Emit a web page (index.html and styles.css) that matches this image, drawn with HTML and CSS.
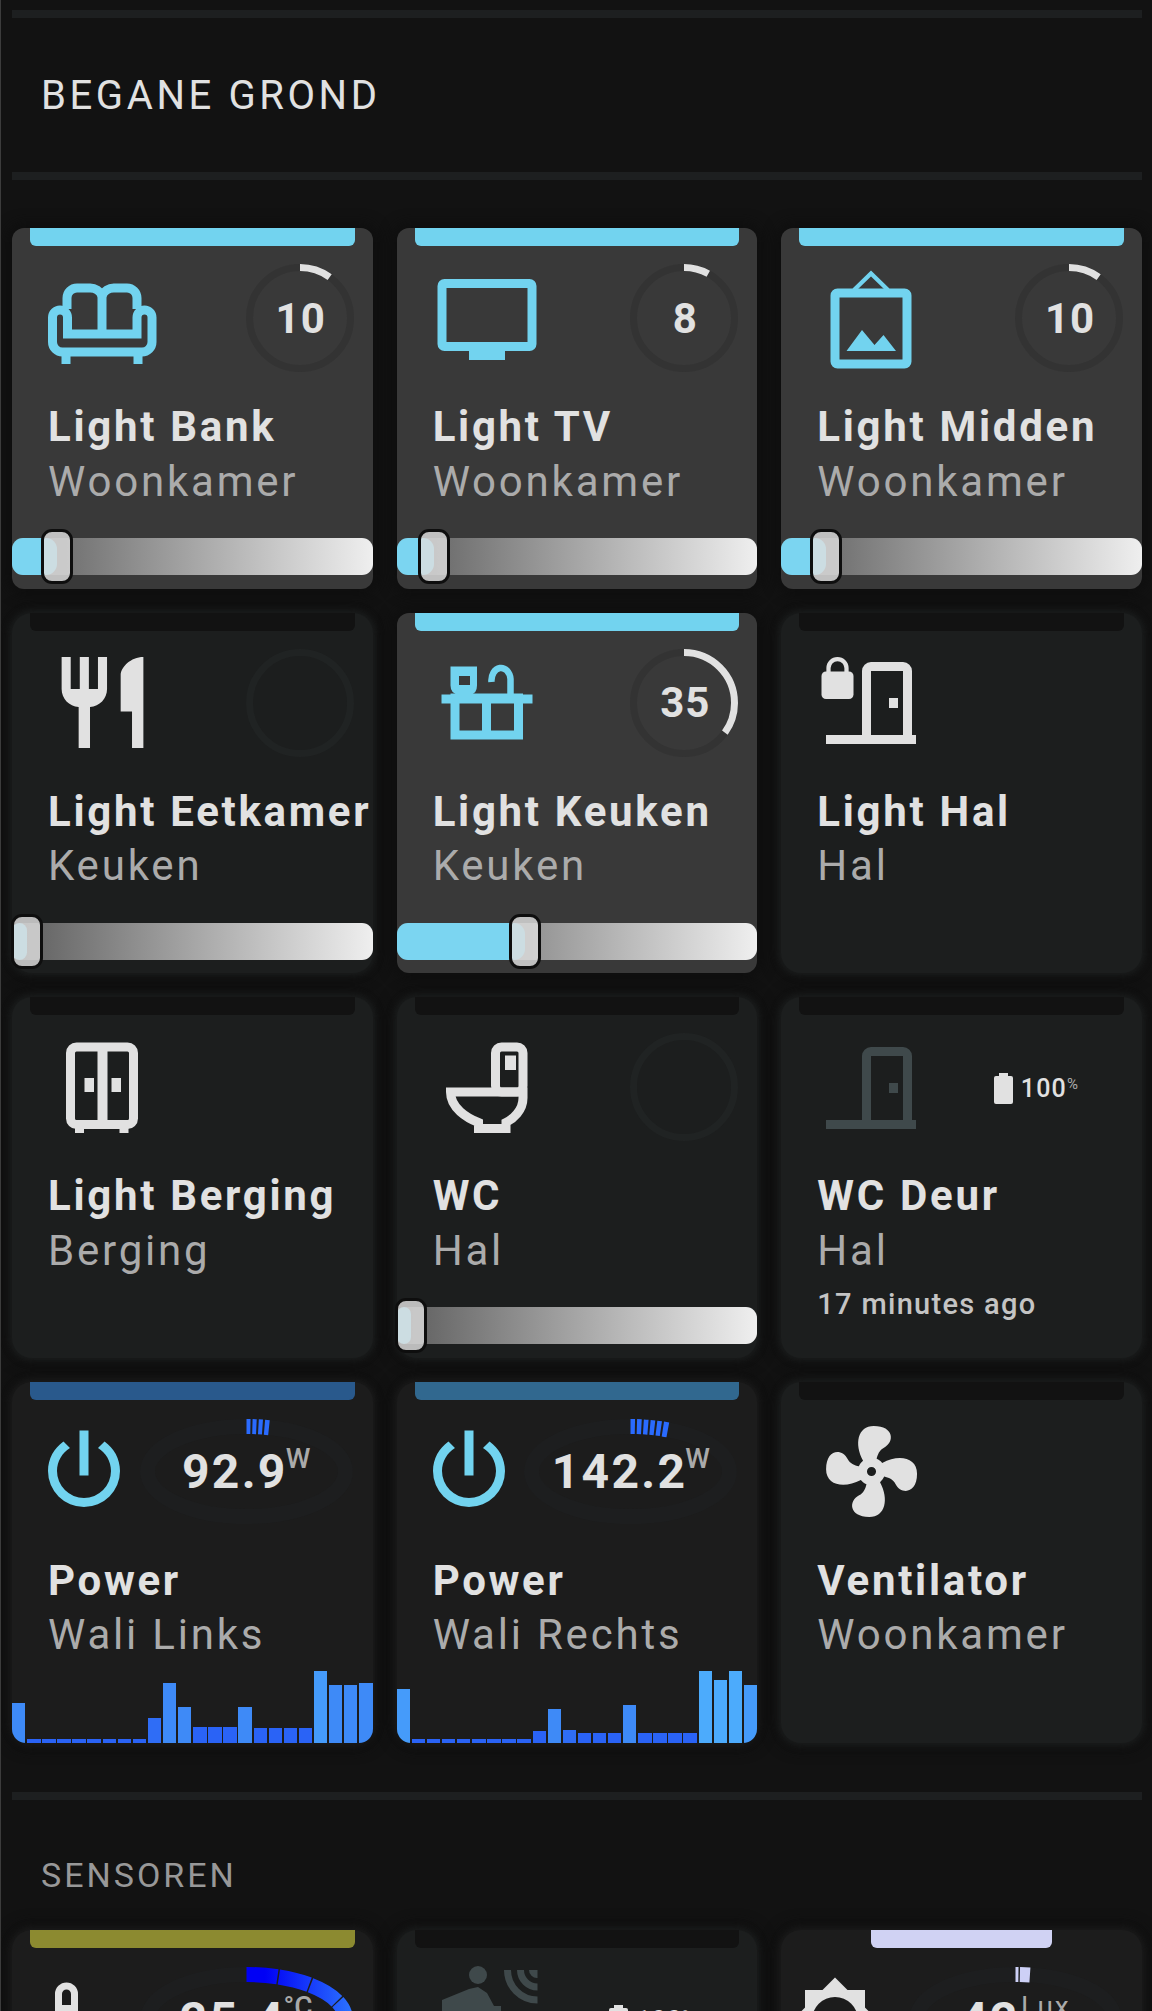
FILE: index.html
```html
<!DOCTYPE html>
<html lang="nl">
<head>
<meta charset="utf-8">
<title>Begane grond</title>
<link rel="stylesheet" href="styles.css">
</head>
<body>
<main class="page">
  <div class="divider first"></div>
  <h2 class="section-title">BEGANE GROND</h2>
  <div class="divider"></div>

  <section class="grid">
    <article class="card on">
      <div class="topbar"></div>
      <div class="head">
        <svg class="icon blue" viewBox="0 0 24 24"><g class="ln"><path d="M5.1 14V10.7a1.5 1.5 0 0 0-3 0V15.6a2 2 0 0 0 2 2H20a2 2 0 0 0 2-2V10.7a1.5 1.5 0 0 0-3 0V14Z"/><path d="M5 9V6.8a2 2 0 0 1 2-2H9.6A2.6 2.6 0 0 1 12 6.3A2.6 2.6 0 0 1 14.4 4.8H17a2 2 0 0 1 2 2V9"/><path d="M12 6V14"/></g><rect x="3.9" y="17" width="1.8" height="3"/><rect x="18.3" y="17" width="1.8" height="3"/></svg>
        <div class="ring"><svg viewBox="0 0 108 108"><circle class="ring-bg" cx="54" cy="54" r="50.5"/><circle class="ring-arc" cx="54" cy="54" r="50.5" pathLength="100" stroke-dasharray="10 100"/></svg><span>10</span></div>
      </div>
      <div class="name">Light Bank</div><div class="sub">Woonkamer</div>
      <div class="slider"><div class="fill" style="width:44.7px"></div><div class="thumb" style="left:28.7px"></div></div>
    </article>

    <article class="card on">
      <div class="topbar"></div>
      <div class="head">
        <svg class="icon blue" viewBox="0 0 24 24"><rect class="ln" x="3" y="3.9" width="18" height="12.6" rx=".5"/><rect x="8.4" y="17" width="7.2" height="2.2"/></svg>
        <div class="ring"><svg viewBox="0 0 108 108"><circle class="ring-bg" cx="54" cy="54" r="50.5"/><circle class="ring-arc" cx="54" cy="54" r="50.5" pathLength="100" stroke-dasharray="8 100"/></svg><span>8</span></div>
      </div>
      <div class="name">Light TV</div><div class="sub">Woonkamer</div>
      <div class="slider"><div class="fill" style="width:37.8px"></div><div class="thumb" style="left:21.8px"></div></div>
    </article>

    <article class="card on">
      <div class="topbar"></div>
      <div class="head">
        <svg class="icon blue" viewBox="0 0 24 24"><rect class="ln" x="4.8" y="5.8" width="14.4" height="14.2" rx=".5"/><path class="ln thin" d="M8.6 5.2L12 1.9L15.4 5.2"/><path d="M7.1 17.4L10.2 13.2L12.7 16.2L14.5 14.2L17 17.4Z"/></svg>
        <div class="ring"><svg viewBox="0 0 108 108"><circle class="ring-bg" cx="54" cy="54" r="50.5"/><circle class="ring-arc" cx="54" cy="54" r="50.5" pathLength="100" stroke-dasharray="10 100"/></svg><span>10</span></div>
      </div>
      <div class="name">Light Midden</div><div class="sub">Woonkamer</div>
      <div class="slider"><div class="fill" style="width:44.7px"></div><div class="thumb" style="left:28.7px"></div></div>
    </article>

    <article class="card off">
      <div class="topbar"></div>
      <div class="head">
        <svg class="icon-s grey" viewBox="0 0 24 24"><path d="M11,9H9V2H7V9H5V2H3V9C3,11.12 4.66,12.84 6.75,12.97V22H9.25V12.97C11.34,12.84 13,11.12 13,9V2H11V9M16,6V14H18.5V22H21V2C18.24,2 16,4.24 16,6Z"/></svg>
        <div class="ring"><svg viewBox="0 0 108 108"><circle class="ring-bg" cx="54" cy="54" r="50.5"/></svg></div>
      </div>
      <div class="name">Light Eetkamer</div><div class="sub">Keuken</div>
      <div class="slider"><div class="fill" style="width:14.7px"></div><div class="thumb" style="left:-1.3px"></div></div>
    </article>

    <article class="card on">
      <div class="topbar"></div>
      <div class="head">
        <svg class="icon blue" viewBox="0 0 24 24"><rect x="2.9" y="9.3" width="18.2" height="1.8"/><rect class="ln" x="5.6" y="10" width="12.7" height="7.4"/><rect x="11" y="10" width="1.8" height="7"/><path fill-rule="evenodd" d="M4.7 3.7H10V7.5Q10 9.3 8.5 9.3H6.5Q4.7 9.3 4.7 7.5ZM6.4 5.6H8.6V7.4H6.4Z"/><path class="ln thin2" d="M12.9 6.8A1.9 2.5 0 0 1 16.7 6.2V10"/></svg>
        <div class="ring"><svg viewBox="0 0 108 108"><circle class="ring-bg" cx="54" cy="54" r="50.5"/><circle class="ring-arc" cx="54" cy="54" r="50.5" pathLength="100" stroke-dasharray="35 100"/></svg><span>35</span></div>
      </div>
      <div class="name">Light Keuken</div><div class="sub">Keuken</div>
      <div class="slider"><div class="fill" style="width:128px"></div><div class="thumb" style="left:112px"></div></div>
    </article>

    <article class="card off">
      <div class="topbar"></div>
      <div class="head">
        <svg class="icon grey" viewBox="0 0 24 24"><path class="ln" d="M11.1 18V4.6a.9.9 0 0 1 .9-.9h6.4a.9.9 0 0 1 .9.9V18"/><rect x="3" y="17.4" width="18" height="1.8"/><rect x="15.6" y="10" width="1.8" height="2"/><rect x="2.1" y="4.7" width="6.4" height="5.5" rx=".9"/><path class="ln thin" d="M3.5 5V4a1.8 1.8 0 0 1 3.6 0V5"/></svg>
      </div>
      <div class="name">Light Hal</div><div class="sub">Hal</div>
    </article>

    <article class="card off">
      <div class="topbar"></div>
      <div class="head">
        <svg class="icon grey" viewBox="0 0 24 24"><rect class="ln" x="5.7" y="2.8" width="12.6" height="15.5" rx="1.2"/><rect x="11.1" y="3" width="2" height="15"/><rect x="8.5" y="9" width="1.9" height="2.8"/><rect x="13.9" y="9" width="1.9" height="2.8"/><rect x="6.6" y="18.5" width="1.8" height="1.5"/><rect x="15.5" y="18.5" width="1.8" height="1.5"/></svg>
      </div>
      <div class="name">Light Berging</div><div class="sub">Berging</div>
    </article>

    <article class="card off">
      <div class="topbar"></div>
      <div class="head">
        <svg class="icon grey" viewBox="0 0 24 24"><rect class="ln" x="13.7" y="2.8" width="5.5" height="9" rx="1.2"/><rect x="15.6" y="4.5" width="2.2" height="2.9"/><path class="ln" d="M4.7 11.8H19.2V13C19.2 15.5 17.2 17.2 15.8 17.9V19.1H10.3V17.9C8 17 4.7 15 4.7 11.8Z"/></svg>
        <div class="ring"><svg viewBox="0 0 108 108"><circle class="ring-bg" cx="54" cy="54" r="50.5"/></svg></div>
      </div>
      <div class="name">WC</div><div class="sub">Hal</div>
      <div class="slider"><div class="fill" style="width:14.7px"></div><div class="thumb" style="left:-1.3px"></div></div>
    </article>

    <article class="card off">
      <div class="topbar"></div>
      <div class="head">
        <svg class="icon slate" viewBox="0 0 24 24"><path class="ln" d="M11.1 18V4.6a.9.9 0 0 1 .9-.9h6.4a.9.9 0 0 1 .9.9V18"/><rect x="3" y="17.4" width="18" height="1.8"/><rect x="15.6" y="10" width="1.8" height="2"/></svg>
        <div class="batt"><svg viewBox="0 0 19 31"><rect x="5" width="9" height="5"/><rect y="3" width="19" height="28" rx="2"/></svg><span>100<sup>%</sup></span></div>
      </div>
      <div class="name">WC Deur</div><div class="sub">Hal</div>
      <div class="ago">17 minutes ago</div>
    </article>

    <article class="card dark">
      <div class="topbar t-power1"></div>
      <div class="head">
        <svg class="icon-p blue" viewBox="0 0 24 24"><path d="M16.56,5.44L15.11,6.89C16.84,7.94 18,9.83 18,12A6,6 0 0,1 12,18A6,6 0 0,1 6,12C6,9.83 7.16,7.94 8.88,6.88L7.44,5.44C5.36,6.88 4,9.28 4,12A8,8 0 0,0 12,20A8,8 0 0,0 20,12C20,9.28 18.64,6.88 16.56,5.44M13,3H11V13H13"/></svg>
        <div class="gauge">
          <svg viewBox="0 0 213 105"><path class="g-bg" d="M106.5 7.5A99 45 0 1 1 106.5 97.5A99 45 0 1 1 106.5 7.5"/><path class="g-seg" stroke-dasharray="4 2 4 2 4 2 4.5 999" d="M106.5 7.5A99 45 0 1 1 106.5 97.5"/></svg>
          <span class="val">92.9<sup>W</sup></span>
        </div>
      </div>
      <div class="name">Power</div><div class="sub">Wali Links</div>
      <div class="bars">
        <i class="b3" style="height:40px"></i><i class="b1" style="height:4px"></i><i class="b1" style="height:4px"></i><i class="b1" style="height:4px"></i><i class="b1" style="height:4px"></i><i class="b1" style="height:4px"></i><i class="b1" style="height:4px"></i><i class="b1" style="height:4px"></i><i class="b1" style="height:4px"></i><i class="b2" style="height:25px"></i><i class="b3" style="height:60px"></i><i class="b3" style="height:36px"></i><i class="b1" style="height:16px"></i><i class="b1" style="height:16px"></i><i class="b1" style="height:16px"></i><i class="b3" style="height:36px"></i><i class="b1" style="height:15px"></i><i class="b1" style="height:15px"></i><i class="b1" style="height:15px"></i><i class="b1" style="height:15px"></i><i class="b4" style="height:72px"></i><i class="b3" style="height:58px"></i><i class="b3" style="height:58px"></i><i class="b3" style="height:60px"></i>
      </div>
    </article>

    <article class="card dark">
      <div class="topbar t-power2"></div>
      <div class="head">
        <svg class="icon-p blue" viewBox="0 0 24 24"><path d="M16.56,5.44L15.11,6.89C16.84,7.94 18,9.83 18,12A6,6 0 0,1 12,18A6,6 0 0,1 6,12C6,9.83 7.16,7.94 8.88,6.88L7.44,5.44C5.36,6.88 4,9.28 4,12A8,8 0 0,0 12,20A8,8 0 0,0 20,12C20,9.28 18.64,6.88 16.56,5.44M13,3H11V13H13"/></svg>
        <div class="gauge">
          <svg viewBox="0 0 213 105"><path class="g-bg" d="M106.5 7.5A99 45 0 1 1 106.5 97.5A99 45 0 1 1 106.5 7.5"/><path class="g-seg" stroke-dasharray="4.5 2 4.5 2 4.5 2 4.5 2 4.5 2 5 999" d="M106.5 7.5A99 45 0 1 1 106.5 97.5"/></svg>
          <span class="val">142.2<sup>W</sup></span>
        </div>
      </div>
      <div class="name">Power</div><div class="sub">Wali Rechts</div>
      <div class="bars">
        <i class="b4" style="height:54px"></i><i class="b1" style="height:4px"></i><i class="b1" style="height:4px"></i><i class="b1" style="height:4px"></i><i class="b1" style="height:4px"></i><i class="b1" style="height:4px"></i><i class="b1" style="height:4px"></i><i class="b1" style="height:4px"></i><i class="b1" style="height:4px"></i><i class="b1" style="height:12px"></i><i class="b3" style="height:34px"></i><i class="b2" style="height:13px"></i><i class="b1" style="height:10px"></i><i class="b1" style="height:10px"></i><i class="b1" style="height:10px"></i><i class="b3" style="height:38px"></i><i class="b1" style="height:10px"></i><i class="b1" style="height:10px"></i><i class="b1" style="height:10px"></i><i class="b1" style="height:10px"></i><i class="b5" style="height:72px"></i><i class="b5" style="height:63px"></i><i class="b5" style="height:72px"></i><i class="b4" style="height:58px"></i>
      </div>
    </article>

    <article class="card off">
      <div class="topbar"></div>
      <div class="head">
        <svg class="icon-s grey" viewBox="0 0 24 24"><path d="M12,11A1,1 0 0,0 11,12A1,1 0 0,0 12,13A1,1 0 0,0 13,12A1,1 0 0,0 12,11M12.5,2C17,2 17.11,5.57 14.75,6.75C13.76,7.24 13.32,8.29 13.13,9.22C13.61,9.42 14.03,9.73 14.35,10.13C18.05,8.13 22.03,8.92 22.03,12.5C22.03,17 18.46,17.1 17.28,14.73C16.78,13.74 15.72,13.3 14.79,13.11C14.59,13.59 14.28,14 13.88,14.34C15.87,18.03 15.08,22 11.5,22C7,22 6.91,18.42 9.27,17.24C10.25,16.75 10.69,15.71 10.89,14.79C10.4,14.59 9.97,14.27 9.65,13.87C5.96,15.85 2,15.07 2,11.5C2,7 5.56,6.89 6.74,9.26C7.24,10.25 8.29,10.68 9.22,10.87C9.41,10.39 9.73,9.97 10.14,9.65C8.15,5.96 8.94,2 12.5,2Z"/></svg>
      </div>
      <div class="name">Ventilator</div><div class="sub">Woonkamer</div>
    </article>
  </section>

  <div class="divider last"></div>
  <h2 class="section-title small">SENSOREN</h2>

  <section class="grid">
    <article class="card dark">
      <div class="topbar t-olive"></div>
      <div class="head">
        <svg class="icon grey" viewBox="0 0 24 24"><path fill-rule="evenodd" d="M2.6 5.8a2.3 2.3 0 0 1 4.6 0V24H2.6ZM4 5.8a.9.9 0 0 1 1.8 0V8H4Z"/></svg>
        <div class="gauge">
          <svg viewBox="0 0 213 105"><defs><linearGradient id="tempgrad" gradientUnits="userSpaceOnUse" x1="125" y1="0" x2="213" y2="0"><stop offset="0" stop-color="#0000f5"/><stop offset="1" stop-color="#2c74ff"/></linearGradient></defs><path class="g-bg" d="M106.5 7.5A99 45 0 1 1 106.5 97.5A99 45 0 1 1 106.5 7.5"/><path class="g-temp" stroke="url(#tempgrad)" stroke-dasharray="31 1.5" d="M106.5 7.5A99 45 0 1 1 106.5 97.5"/></svg>
          <span class="val">25.4<sup>°C</sup></span>
        </div>
      </div>
    </article>

    <article class="card off">
      <div class="topbar"></div>
      <div class="head">
        <svg class="icon slate" viewBox="0 0 120 120"><circle cx="51" cy="10" r="9"/><path d="M15 35L42 24L51 22L60 28L67 41H74V49H15Z"/><path class="wave" d="M80.5 5A30 30 0 0 0 110.5 35"/><path class="wave" d="M93.5 5A17 17 0 0 0 110.5 22"/><path d="M102 5H110.5V13A8 8 0 0 1 102 5Z"/></svg>
        <div class="batt"><svg viewBox="0 0 19 31"><rect x="5" width="9" height="5"/><rect y="3" width="19" height="28" rx="2"/></svg><span>100<sup>%</sup></span></div>
      </div>
    </article>

    <article class="card dark">
      <div class="topbar t-lav"></div>
      <div class="head">
        <svg class="icon-sun grey" viewBox="0 0 109 109"><rect x="18" y="25" width="60" height="60" transform="rotate(45 48 55)"/><rect x="18" y="25" width="60" height="60"/><circle class="sun-hole" cx="48" cy="55" r="23"/></svg>
        <div class="gauge">
          <svg viewBox="0 0 213 105"><path class="g-bg" d="M106.5 7.5A99 45 0 1 1 106.5 97.5A99 45 0 1 1 106.5 7.5"/><path class="g-lav" stroke-dasharray="3 1.5 10 999" d="M106.5 7.5A99 45 0 1 1 106.5 97.5"/></svg>
          <span class="val">42<sup class="thin-sup">Lux</sup></span>
        </div>
      </div>
    </article>
  </section>
</main>
</body>
</html>
```
FILE: styles.css
```css
* { box-sizing: border-box; }
html, body {
  margin: 0;
  height: 2011px;
  overflow: hidden;
  background: #121212;
}
body {
  font-family: Roboto, "Noto Sans", sans-serif;
  color: #e1e1e1;
}
.page {
  border-left: 1px solid #3c3c3c;
  padding: 0 10px 0 11px;
  height: 2011px;
  overflow: hidden;
}
.divider {
  height: 8px;
  background: #1d1f20;
}
.divider.first { margin-top: 10px; }
.divider.last { margin-top: 49px; }

.section-title {
  margin: 0;
  height: 154px;
  padding-left: 29px;
  display: flex;
  align-items: center;
  font-size: 40px;
  font-weight: 400;
  letter-spacing: 3.6px;
  color: #e1e1e1;
}
.section-title.small {
  height: 130px;
  padding-top: 20px;
  font-size: 34px;
  font-weight: 400;
  letter-spacing: 3px;
  color: #989898;
}

.grid {
  display: grid;
  grid-template-columns: repeat(3, 1fr);
  grid-auto-rows: 360.67px;
  gap: 24px;
  margin-top: 48px;
}
.divider.last + .section-title + .grid { margin-top: 0; }

.card {
  position: relative;
  display: flex;
  flex-direction: column;
  min-width: 0;
}
.card.on {
  background: #393939;
  border-radius: 12px;
  box-shadow: 0 0 14px 4px #0e0e0e;
}
.card.off {
  background: #1c1e1e;
  border-radius: 20px;
  box-shadow: 0 0 7px 3px #1b1d1d, 0 0 14px 6px #0f0f0f;
}
.card.dark {
  background: #1c1c1c;
  border-radius: 20px;
  box-shadow: 0 0 7px 3px #1b1b1b, 0 0 14px 6px #0f0f0f;
}

.topbar {
  height: 18px;
  margin: 0 18px;
  flex: none;
  border-radius: 0 0 6px 6px;
  background: #121212;
}
.card.on .topbar { background: #72d3ef; }
.topbar.t-power1 { background: #29598c; }
.topbar.t-power2 { background: #31688f; }
.topbar.t-olive { background: #8c8a30; }
.topbar.t-lav { background: #d0d2f3; margin: 0 90px; }

.head {
  position: relative;
  display: flex;
  justify-content: space-between;
  align-items: flex-start;
  height: 120px;
  margin-top: 17.5px;
  flex: none;
}
.icon { width: 120px; height: 120px; margin-left: 30px; flex: none; }
.icon-s { width: 109px; height: 109px; margin-left: 36px; flex: none; }
.icon-p { width: 108px; height: 108px; margin-left: 18px; flex: none; }
.icon-sun { width: 109px; height: 109px; margin-left: 6px; flex: none; }
.blue { fill: #72d3ef; stroke: #72d3ef; stroke-width: 0; }
.grey { fill: #e1e1e1; stroke: #e1e1e1; stroke-width: 0; }
.slate { fill: #3f494b; stroke: #3f494b; stroke-width: 0; }
.ln { fill: none; stroke-width: 1.8; }
.ln path, .ln rect { fill: none; }
.thin { stroke-width: .85; }
.thin2 { stroke-width: 1.3; }
.wave { fill: none; stroke-width: 7; }
.sun-hole { fill: #1c1c1c; stroke: none; }

.ring {
  position: relative;
  width: 108px;
  height: 108px;
  margin: .5px 19px 0 0;
  display: flex;
  align-items: center;
  justify-content: center;
  flex: none;
}
.ring svg { position: absolute; inset: 0; width: 108px; height: 108px; transform: rotate(-90deg); }
.ring-bg { fill: none; stroke: #202323; stroke-width: 7; }
.card.on .ring-bg { stroke: #333333; }
.ring-arc { fill: none; stroke: #e1e1e1; stroke-width: 7; }
.ring span {
  position: relative;
  left: 1px;
  font-size: 42px;
  font-weight: 700;
  letter-spacing: 1px;
}

.name, .sub {
  padding-left: 36px;
  line-height: 55px;
  font-size: 42px;
  white-space: nowrap;
  flex: none;
}
.name { margin-top: 15.5px; font-weight: 700; letter-spacing: 2.7px; color: #e1e1e1; }
.sub { margin-top: -.5px; font-weight: 400; color: #ababab; letter-spacing: 2.8px; }

.ago {
  padding-left: 36px;
  margin-top: 8.5px;
  font-size: 29px;
  font-weight: 500;
  letter-spacing: 1.3px;
  line-height: 36px;
  color: #c4c4c4;
}

.slider {
  position: relative;
  height: 37px;
  margin-top: auto;
  margin-bottom: 13.67px;
  border-radius: 11px;
  background: linear-gradient(90deg, #5c5c5c, #efefef);
}
.fill {
  position: absolute;
  left: 0;
  top: 0;
  bottom: 0;
  background: #7bd5f1;
  border-radius: 11px;
}
.thumb {
  position: absolute;
  top: -9px;
  width: 32px;
  height: 55px;
  border: 3.5px solid #0e0e0e;
  border-radius: 11px;
  background: rgba(222, 222, 222, .82);
}

.batt {
  display: flex;
  align-items: center;
  gap: 8px;
  margin: 40px 64px 0 0;
  font-size: 25px;
  font-weight: 500;
  letter-spacing: 1.2px;
}
.batt svg { width: 19px; height: 31px; fill: #e1e1e1; }
.batt sup { font-size: 15px; font-weight: 400; color: #aaa; vertical-align: 8px; line-height: 0; letter-spacing: 0; }

.gauge {
  position: absolute;
  top: 1.5px;
  right: 20px;
  width: 213px;
  height: 105px;
  display: flex;
  align-items: center;
  justify-content: center;
}
.gauge svg { position: absolute; inset: 0; width: 213px; height: 105px; }
.g-bg { fill: none; stroke: #1d1e1f; stroke-width: 15; }
.g-seg { fill: none; stroke: #2a6bff; stroke-width: 15; }
.g-temp { fill: none; stroke-width: 15; }
.g-lav { fill: none; stroke: #cdd0f6; stroke-width: 15; }
.val {
  position: relative;
  font-size: 48px;
  font-weight: 700;
  letter-spacing: 2.3px;
  white-space: nowrap;
}
.val sup {
  font-size: 28px;
  font-weight: 500;
  color: #aaa;
  vertical-align: 20px;
  line-height: 0;
  margin-left: -2px;
  letter-spacing: 0;
}
.val sup.thin-sup { font-weight: 400; letter-spacing: 2px; margin-left: 1px; }

.bars {
  display: flex;
  align-items: flex-end;
  gap: 1.7px;
  height: 72px;
  margin-top: auto;
  overflow: hidden;
  border-radius: 0 0 14px 14px;
}
.bars i { flex: 1 1 0; display: block; }
.b1 { background: #2a63f6; }
.b2 { background: #2f6df6; }
.b3 { background: #3e8af7; }
.b4 { background: #459bfa; }
.b5 { background: #4cabfc; }
```
